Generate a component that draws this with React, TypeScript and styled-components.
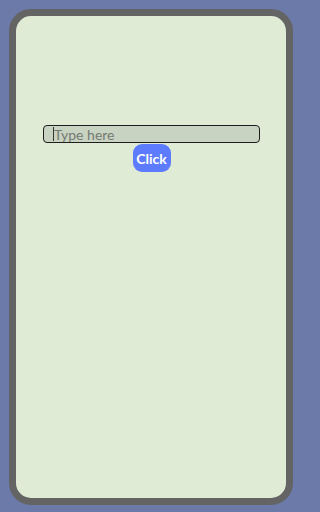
import { useEffect, useRef } from "react"
import styled, { createGlobalStyle } from "styled-components"

const Global = createGlobalStyle`
html, body {
  margin: 0;
  padding: 0;
  background: #6b7aa8;
}
body {
  font-family: "Lato", "Open Sans", sans-serif;
}
`

const Page = styled.div`
width: 296px;
height: 512px;
padding: 9px 3px 7px 9px;
box-sizing: border-box;
`

const Phone = styled.div`
width: 284px;
height: 496px;
box-sizing: border-box;
border: 7px solid #646464;
border-radius: 22px;
background: #e0ebd6;
display: flex;
flex-direction: column;
align-items: center;
padding: 109px 26px 0 27px;
`

const FieldWrap = styled.div`
position: relative;
width: 100%;
height: 18px;
`

const Field = styled.input`
display: block;
width: 100%;
height: 18px;
margin: 0;
box-sizing: border-box;
border: 1px solid #1e1e1e;
border-radius: 4px;
background: #c9d3c2;
padding: 0 0 0 10px;
font-family: "Lato", "Open Sans", sans-serif;
font-size: 14px;
color: #333;
outline: none;
caret-color: transparent;

&::placeholder {
  color: #747a72;
}
`

// blinking text cursor, frozen in its visible state
const Caret = styled.span`
position: absolute;
left: 10px;
top: 2px;
width: 1px;
height: 14px;
background: #333;
pointer-events: none;
`

const Button = styled.button`
margin-top: 1px;
width: 38px;
height: 28px;
border: none;
border-radius: 9px;
background: #5d7cfd;
color: #fff;
font-family: "Lato", "Open Sans", sans-serif;
font-size: 14px;
font-weight: 700;
padding: 0;
cursor: pointer;
`

export default function App() {
    const ref = useRef<HTMLInputElement>(null)

    useEffect(() => {
        ref.current?.focus()
    }, [])

    return (
        <>
            <Global />
            <Page>
                <Phone>
                    <FieldWrap>
                        <Field ref={ref} placeholder="Type here" />
                        <Caret />
                    </FieldWrap>
                    <Button>Click</Button>
                </Phone>
            </Page>
        </>
    )
}
